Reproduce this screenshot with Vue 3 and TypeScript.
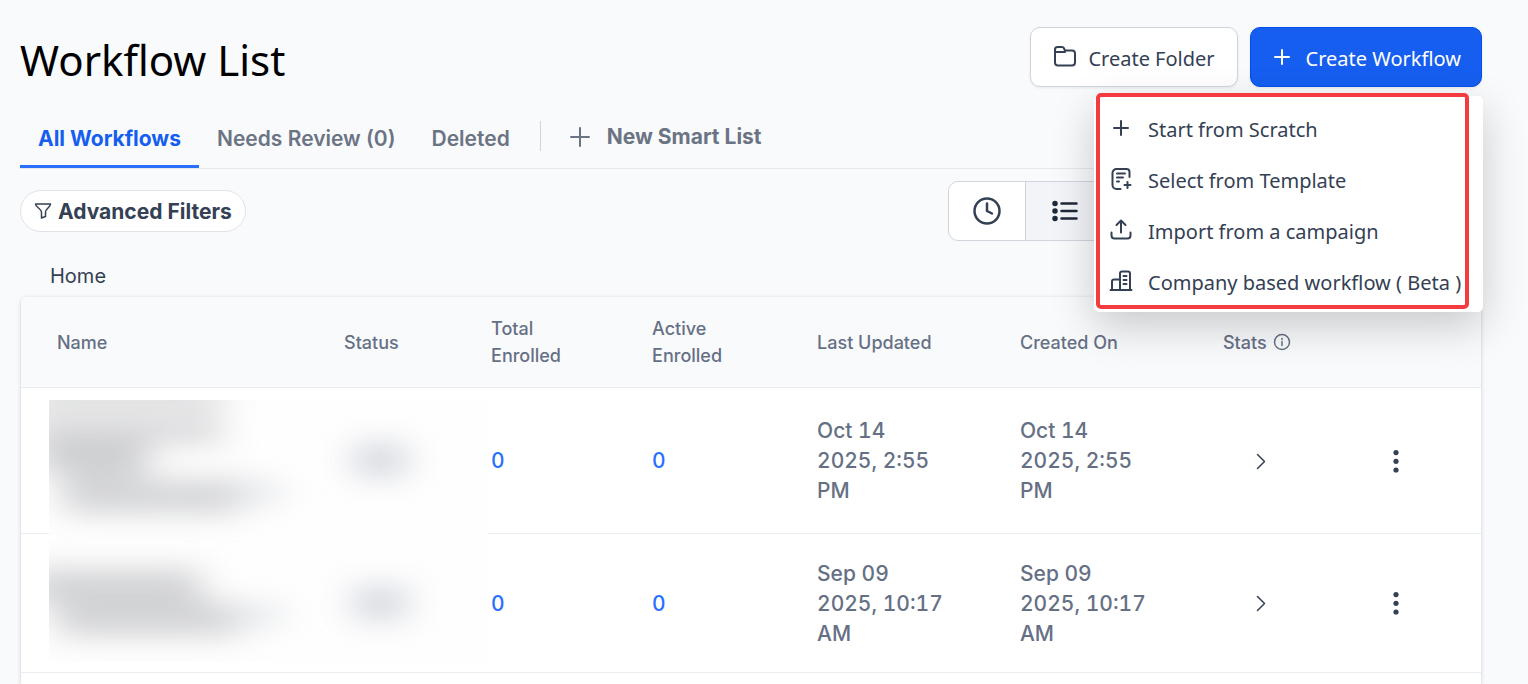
<script setup lang="ts">
interface WorkflowRow {
  id: number
  total: number
  active: number
  updated: string
  created: string
}

interface MenuItem {
  icon: 'plus' | 'template' | 'upload' | 'building'
  label: string
}

const menuItems: MenuItem[] = [
  { icon: 'plus', label: 'Start from Scratch' },
  { icon: 'template', label: 'Select from Template' },
  { icon: 'upload', label: 'Import from a campaign' },
  { icon: 'building', label: 'Company based workflow ( Beta )' },
]

const tabs: string[] = ['All Workflows', 'Needs Review (0)', 'Deleted']

const rows: WorkflowRow[] = [
  { id: 1, total: 0, active: 0, updated: 'Oct 14 2025, 2:55 PM', created: 'Oct 14 2025, 2:55 PM' },
  { id: 2, total: 0, active: 0, updated: 'Sep 09 2025, 10:17 AM', created: 'Sep 09 2025, 10:17 AM' },
]
</script>

<template>
  <main class="page">
    <header class="header">
      <h1 class="title">Workflow List</h1>
      <div class="actions">
        <button type="button" class="btn btn-light">
          <svg class="icon" width="24" height="24" viewBox="0 0 24 24">
            <path d="M2 8V4.500A2.500 2.500 0 0 1 4.500 2h4.500a2 2 0 0 1 1.800 1l1.200 2.500H19a3 3 0 0 1 3 3V17.500a3 3 0 0 1-3 3H5a3 3 0 0 1-3-3V7h10" />
          </svg>
          <span>Create Folder</span>
        </button>
        <div class="menu-anchor">
          <button type="button" class="btn btn-primary">
            <svg class="icon" width="18" height="18" viewBox="0 0 18 18"><path d="M9 2v14M2 9h14" /></svg>
            <span>Create Workflow</span>
          </button>
          <div class="menu">
            <button v-for="item in menuItems" :key="item.icon" type="button" class="menu-item">
              <svg class="icon" width="24" height="24" viewBox="0 0 24 24">
                <path v-if="item.icon === 'plus'" d="M12 5v14M5 12h14" />
                <path v-else-if="item.icon === 'template'" d="M20.500 10V5a3 3 0 0 0-3-3H7.500a4 4 0 0 0-4 4v12a4 4 0 0 0 4 4h4M8 6.500h8M8 10.500h6M8 14.500h2M18.500 15v6M15.500 18h6" />
                <path v-else-if="item.icon === 'upload'" d="M2.500 14.500v3a3 3 0 0 0 3 3h13a3 3 0 0 0 3-3v-3M12 14.500V3M7.500 7L12 2.500 16.500 7" />
                <path v-else d="M1.500 21h21M11 21V4.500a2 2 0 0 1 2-2h6a2 2 0 0 1 2 2V21M11 10.500H5a2 2 0 0 0-2 2V21M14.500 7h3M14.500 11h3M14.500 15h3" />
              </svg>
              <span>{{ item.label }}</span>
            </button>
            <div class="highlight"></div>
          </div>
        </div>
      </div>
    </header>

    <nav class="tabs">
      <button
        v-for="(tab, i) in tabs"
        :key="tab"
        type="button"
        class="tab"
        :class="{ active: i === 0 }"
      >{{ tab }}</button>
      <button type="button" class="new-list">
        <svg class="icon" width="20" height="20" viewBox="0 0 20 20"><path d="M10 1v18M1 10h18" /></svg>
        <span>New Smart List</span>
      </button>
    </nav>

    <div class="toolbar">
      <button type="button" class="filter">
        <svg class="icon" width="18" height="18" viewBox="0 0 18 18">
          <path d="M1.500 2h15c0 3-5 5-5 8v4.500l-4 1.500v-6c0-3-6-5-6-8z" />
        </svg>
        <span>Advanced Filters</span>
      </button>
      <div class="views">
        <button type="button" class="view" aria-label="Recent">
          <svg class="icon" width="30" height="30" viewBox="0 0 30 30">
            <circle cx="15" cy="15" r="12.500" /><path d="M15 7.500V15l5 2.500" />
          </svg>
        </button>
        <button type="button" class="view selected" aria-label="List">
          <svg class="icon list" width="28" height="28" viewBox="0 0 28 28">
            <path d="M10.500 6.500h15M10.500 14h15M10.500 21.500h15" />
            <circle cx="4" cy="6.500" r="1.500" /><circle cx="4" cy="14" r="1.500" /><circle cx="4" cy="21.500" r="1.500" />
          </svg>
        </button>
      </div>
    </div>

    <div class="crumbs"><a href="#">Home</a></div>

    <section class="card">
      <table class="table">
        <colgroup>
          <col class="c-name" /><col class="c-status" /><col class="c-total" /><col class="c-active" />
          <col class="c-date" /><col class="c-date" /><col class="c-stats" /><col />
        </colgroup>
        <thead>
          <tr>
            <th>Name</th>
            <th>Status</th>
            <th>Total<br />Enrolled</th>
            <th>Active<br />Enrolled</th>
            <th>Last Updated</th>
            <th>Created On</th>
            <th>
              <span class="stats">Stats
                <svg class="icon info" width="18" height="18" viewBox="0 0 18 18">
                  <circle cx="9" cy="9" r="7.500" /><path d="M9 8.500v4M9 5.500v1" />
                </svg>
              </span>
            </th>
            <th></th>
          </tr>
        </thead>
        <tbody>
          <tr v-for="row in rows" :key="row.id" :class="{ tall: row.id === 1 }">
            <td></td>
            <td></td>
            <td><a href="#" class="count">{{ row.total }}</a></td>
            <td><a href="#" class="count">{{ row.active }}</a></td>
            <td><span class="date">{{ row.updated }}</span></td>
            <td><span class="date">{{ row.created }}</span></td>
            <td class="center">
              <button type="button" class="icon-btn" aria-label="Show stats">
                <svg class="icon chevron" width="18" height="18" viewBox="0 0 18 18"><path d="M6.500 1.500l7 7-7 7" /></svg>
              </button>
            </td>
            <td class="center">
              <button type="button" class="icon-btn" aria-label="More actions">
                <svg width="24" height="24" viewBox="0 0 24 24" fill="#344054">
                  <circle cx="11" cy="2.600" r="2.600" /><circle cx="11" cy="11.300" r="2.600" /><circle cx="11" cy="20" r="2.600" />
                </svg>
              </button>
            </td>
          </tr>
        </tbody>
      </table>
      <svg class="redacted" width="439" height="262" viewBox="0 0 439 262">
        <defs>
          <filter id="soft" x="-50%" y="-50%" width="200%" height="200%"><feGaussianBlur stdDeviation="18 14" /></filter>
        </defs>
        <rect width="439" height="262" fill="#fefefe" />
        <g filter="url(#soft)" opacity="0.7">
          <rect x="-20" y="-20" width="195" height="30" fill="#cfd0d2" />
          <rect x="-20" y="19" width="193" height="24" fill="#c4c5c8" />
          <rect x="-10" y="43" width="110" height="28" fill="#b8b9bd" />
          <rect x="10" y="71" width="80" height="12" fill="#cccdcf" />
          <rect x="14" y="80" width="176" height="33" fill="#c0c1c4" />
          <rect x="190" y="81" width="42" height="22" fill="#dadde2" />
          <rect x="-20" y="169" width="172" height="34" fill="#c0c1c4" />
          <rect x="8" y="203" width="180" height="33" fill="#c0c1c4" />
          <rect x="188" y="204" width="44" height="22" fill="#dadde2" />
          <rect x="305" y="43" width="52" height="34" fill="#c4c7d1" />
          <rect x="305" y="186" width="52" height="34" fill="#c4c7d1" />
        </g>
      </svg>
    </section>
  </main>
</template>

<style>
body {
  margin: 0;
  background: #f9fafc;
}
</style>

<style scoped>
.page {
  box-sizing: border-box;
  display: flex;
  flex-direction: column;
  min-height: 100vh;
  padding: 27px 46px 0 20px;
  font-family: Inter, 'Liberation Sans', sans-serif;
  color: #344054;
}
button {
  margin: 0;
  padding: 0;
  border: 0;
  background: none;
  font: inherit;
  color: inherit;
  cursor: pointer;
}
a {
  color: inherit;
  text-decoration: none;
}
.icon {
  flex: none;
  fill: none;
  stroke: currentColor;
  stroke-width: 2;
  stroke-linecap: round;
  stroke-linejoin: round;
}
.header {
  display: flex;
  justify-content: space-between;
  align-items: flex-start;
}
.title {
  margin: 0;
  font: 400 42px/66px 'Noto Sans', 'Open Sans', sans-serif;
  color: #000;
}
.actions {
  display: flex;
  gap: 12px;
}
.btn {
  box-sizing: border-box;
  display: flex;
  align-items: center;
  gap: 11px;
  height: 60px;
  padding: 4px 22px 0;
  border: 1px solid #d0d5dd;
  border-radius: 10px;
  font: 400 20px/30px 'Noto Sans', 'Open Sans', sans-serif;
  white-space: nowrap;
  box-shadow: 0 1px 3px rgba(16, 24, 40, 0.08);
}
.btn .icon {
  margin-bottom: 4px;
}
.btn-light {
  background: #fff;
}
.btn-primary {
  gap: 15px;
  padding-right: 20px;
  background: #155eef;
  border-color: #004eeb;
  color: #fff;
}
.menu-anchor {
  position: relative;
}
.menu {
  position: absolute;
  z-index: 2;
  top: 69px;
  right: -1px;
  box-sizing: border-box;
  width: 389px;
  padding: 8px 0 4px;
  border-radius: 5px;
  background: #fff;
  box-shadow: 0 14px 44px rgba(0, 0, 0, 0.2);
}
.menu-item {
  display: flex;
  align-items: center;
  gap: 15px;
  width: 100%;
  height: 51px;
  padding-left: 15px;
  font: 400 20px/30px 'Noto Sans', 'Open Sans', sans-serif;
  white-space: nowrap;
}
.menu-item .icon {
  margin-bottom: 4px;
}
.highlight {
  position: absolute;
  top: -3px;
  right: 14px;
  bottom: 3px;
  left: 2px;
  border: 4px solid #f43b3f;
  border-radius: 5px;
  pointer-events: none;
}
.tabs {
  display: flex;
  align-items: flex-end;
  height: 75px;
  border-bottom: 1px solid #e4e7ec;
  font-size: 21px;
  line-height: 30px;
  font-weight: 700;
  color: #6b7484;
}
.tab {
  padding: 0 18px 11px;
  border-bottom: 3px solid transparent;
  font-weight: 600;
  white-space: nowrap;
}
.tab.active {
  font-weight: 700;
  color: #155eef;
  border-color: #2970ff;
}
.new-list {
  display: flex;
  align-items: center;
  gap: 17px;
  height: 30px;
  margin: 0 0 17px 12px;
  padding-top: 1px;
  padding-left: 29px;
  border-left: 1px solid #d0d5dd;
}
.toolbar {
  display: flex;
  align-items: center;
  justify-content: space-between;
  margin-top: 12px;
}
.filter {
  display: flex;
  align-items: center;
  gap: 6px;
  height: 42px;
  padding: 1px 13px 0;
  border: 1px solid #e0e3e8;
  border-radius: 21px;
  background: #fff;
  font-size: 21px;
  line-height: 30px;
  font-weight: 700;
}
.filter .icon {
  margin-bottom: 2px;
  stroke-width: 1.500;
}
.views {
  display: flex;
  box-sizing: border-box;
  height: 60px;
  margin-right: 378px;
  border: 1px solid #d0d5dd;
  border-radius: 10px;
  background: #fff;
  overflow: hidden;
}
.view {
  display: flex;
  align-items: center;
  justify-content: center;
  width: 76px;
}
.view .icon {
  stroke-width: 2.500;
}
.view.selected {
  width: 78px;
  border-left: 1px solid #d0d5dd;
  background: #f2f4f7;
  color: #1d2939;
}
.icon.list circle {
  fill: currentColor;
}
.crumbs {
  padding: 20px 30px 6px;
  font: 400 20px/30px Inter, sans-serif;
}
.card {
  position: relative;
  flex: 1;
  margin: 0 1px;
  background: #fff;
  border-radius: 6px 6px 0 0;
  box-shadow: 0 1px 4px rgba(16, 24, 40, 0.2);
}
.table {
  width: 100%;
  table-layout: fixed;
  border-collapse: separate;
  border-spacing: 0;
  color: #667085;
}
.c-name { width: 21.03%; }
.c-status { width: 10.07%; }
.c-total { width: 11.03%; }
.c-active { width: 11.3%; }
.c-date { width: 13.9%; }
.c-stats { width: 7.26%; }
th,
td {
  box-sizing: border-box;
  padding: 0 0 0 16px;
  border-bottom: 1px solid #eaecf0;
  text-align: left;
}
th {
  height: 91px;
  background: #f9fafc;
  font-size: 18px;
  line-height: 27px;
  font-weight: 500;
}
th:first-child {
  padding-left: 36px;
  border-top-left-radius: 6px;
}
th:last-child {
  border-top-right-radius: 6px;
}
td {
  height: 139px;
  padding-top: 1px;
  font-size: 21px;
  line-height: 30px;
  font-weight: 500;
  font-variant-numeric: tabular-nums;
}
.tall td {
  height: 146px;
}
.stats {
  display: flex;
  align-items: center;
  gap: 6px;
}
.info {
  stroke-width: 1.500;
}
.count {
  color: #2970ff;
}
.date {
  display: block;
  max-width: 130px;
}
td.center {
  padding: 0;
  text-align: center;
  color: #344054;
}
.icon-btn {
  display: inline-flex;
  vertical-align: middle;
}
.chevron {
  stroke-width: 1.500;
}
.redacted {
  position: absolute;
  top: 103px;
  left: 28px;
  pointer-events: none;
}
</style>
